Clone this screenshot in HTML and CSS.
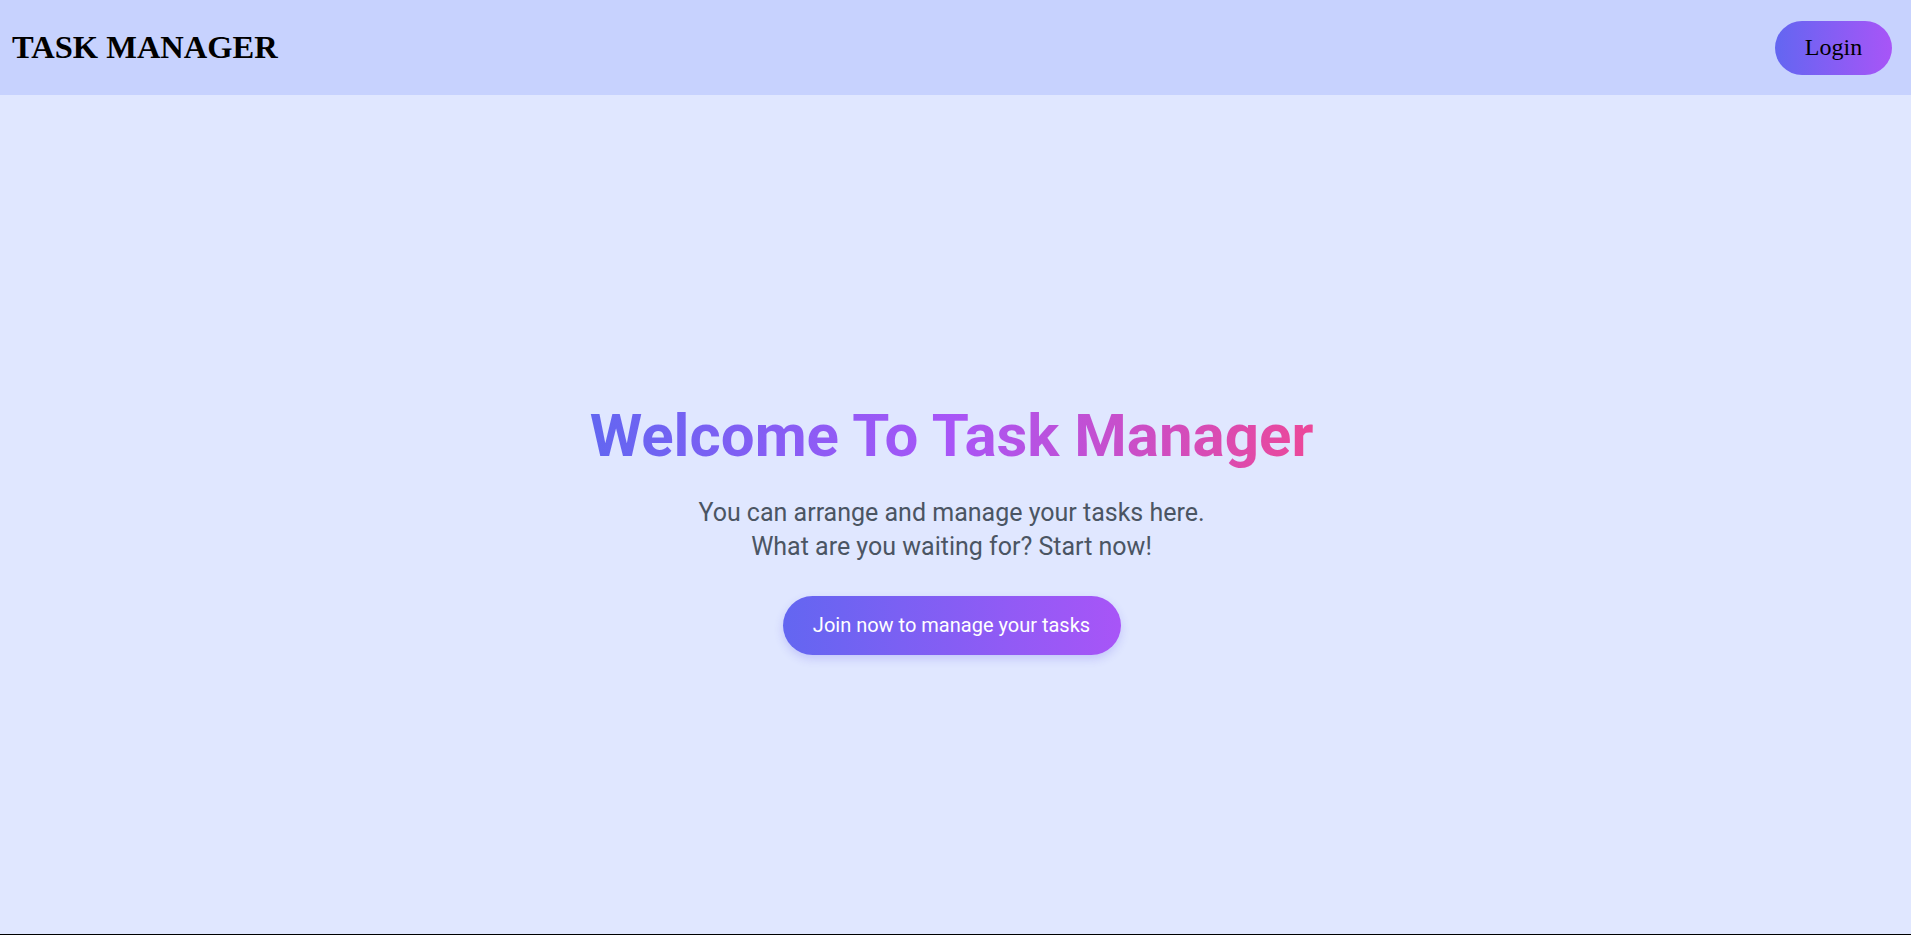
FILE: index.html
```html
<!DOCTYPE html>
<html lang="en">
<head>
<meta charset="utf-8">
<title>Task Manager</title>
<link rel="stylesheet" href="styles.css">
</head>
<body>
<div class="page">
  <header class="topbar">
    <h1 class="brand">TASK MANAGER</h1>
    <button class="login-btn">Login</button>
  </header>
  <main class="hero">
    <h2 class="hero-title">Welcome To Task Manager</h2>
    <p class="hero-text">You can arrange and manage your tasks here.<br>What are you waiting for? Start now!</p>
    <button class="join-btn">Join now to manage your tasks</button>
  </main>
  <footer class="bottom-line"></footer>
</div>
</body>
</html>
```
FILE: styles.css
```css
* { box-sizing: border-box; }
html, body { margin: 0; padding: 0; }
body {
  background: #e0e7ff;
  font-family: "Liberation Serif", "Times New Roman", serif;
}
.page {
  display: flex;
  flex-direction: column;
  height: 935px;
}
.topbar {
  height: 95px;
  flex: 0 0 95px;
  background: #c7d2fe;
  display: flex;
  align-items: center;
  justify-content: space-between;
  padding: 0 19px 0 12px;
}
.brand {
  margin: 0;
  font-size: 32.5px;
  font-weight: bold;
  color: #000;
  font-family: "Liberation Serif", "Times New Roman", serif;
}
.login-btn {
  width: 117px;
  height: 54px;
  border: none;
  border-radius: 27px;
  background: linear-gradient(90deg, #6366f1, #a855f7);
  font-family: "Liberation Serif", "Times New Roman", serif;
  font-size: 24px;
  color: #000;
  padding: 0;
}
.hero {
  flex: 1;
  display: flex;
  flex-direction: column;
  align-items: center;
  justify-content: center;
  font-family: Roboto, "Noto Sans", sans-serif;
  padding: 25px 8px 0 0;
}
.hero-title {
  margin: 0;
  font-family: Roboto, sans-serif;
  font-weight: bold;
  font-size: 60px;
  line-height: 72px;
  background: linear-gradient(90deg, #6366f1, #a855f7 50%, #ec4899);
  -webkit-background-clip: text;
  background-clip: text;
  color: transparent;
}
.hero-text {
  margin: 24px 0 32px;
  text-align: center;
  font-size: 25px;
  line-height: 34px;
  color: #4b5563;
}
.join-btn {
  width: 338px;
  height: 59px;
  border: none;
  border-radius: 30px;
  background: linear-gradient(90deg, #6366f1, #a855f7);
  color: #fff;
  font-family: Roboto, sans-serif;
  font-size: 20px;
  box-shadow: 0 4px 10px rgba(79, 70, 229, 0.2);
}
.bottom-line {
  flex: 0 0 1px;
  height: 1px;
  background: #000;
}
```
